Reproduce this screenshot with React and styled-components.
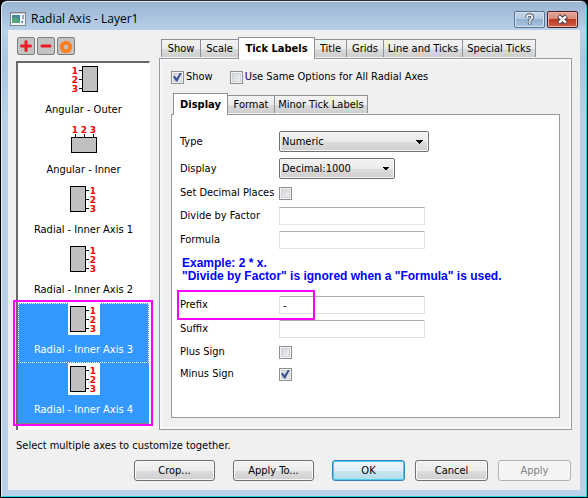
import React, { useState } from 'react';
import styled, { createGlobalStyle, css } from 'styled-components';

const uiFont = '11px/14px "DejaVu Sans Condensed", "DejaVu Sans", sans-serif';

const GlobalStyle = createGlobalStyle`
  *, *::before, *::after { box-sizing: border-box; }
  body { margin: 0; background: #000; font: ${uiFont}; color: #000; }
  button, input, select { font: inherit; color: inherit; margin: 0; }
`;

const DialogWindow = styled.main`
  display: flex;
  flex-direction: column;
  min-height: 100vh;
  padding: 1px 7px 7px 7px;
  border: 1px solid #000;
  border-top-color: #2b2a33;
  border-radius: 7px 7px 0 0;
  background: linear-gradient(#98b3d1, #b9d1ea 30px, #a9c6e2 60px, #b9d1ea 120px);
  box-shadow: inset 1px 1px 0 #dceaf6, inset -1px -1px 0 #25cfe6;
`;

const TitleBar = styled.header`
  display: flex;
  align-items: center;
  gap: 5px;
  height: 28px;
  padding: 6px 2px 0;
`;

const Title = styled.h1`
  flex: 1;
  margin: 0;
  font: 12px/18px "Open Sans", sans-serif;
`;

const CaptionButtons = styled.div`
  display: flex;
  gap: 2px;
`;

const CaptionButton = styled.button`
  display: grid;
  place-items: center;
  width: 31px;
  height: 17px;
  padding: 0;
  border: 1px solid ${(p) => (p.$danger ? '#4d1c20' : '#5b7189')};
  border-radius: 2px;
  background: ${(p) =>
    p.$danger
      ? 'linear-gradient(#e3a596, #d98876 50%, #bd3a21 50%, #cf6046)'
      : 'linear-gradient(#c3d5ea, #b3cae3 50%, #94b1d0 50%, #a9c5e3)'};
  box-shadow: inset 0 0 0 1px ${(p) => (p.$danger ? '#eab5a8' : '#d3e1f0')};
`;

const Client = styled.div`
  display: flex;
  flex: 1;
  flex-direction: column;
  padding: 7px 8px 9px;
  background: #f0f0f0;
`;

const Columns = styled.div`
  display: flex;
  flex: 1;
  gap: 9px;
`;

const Sidebar = styled.aside`
  display: flex;
  flex: 0 0 134px;
  flex-direction: column;
  gap: 6px;
`;

const Toolbar = styled.div`
  display: flex;
  gap: 2px;
  padding-left: 1px;
`;

const ToolButton = styled.button`
  display: grid;
  place-items: center;
  width: 18px;
  height: 18px;
  padding: 0;
  border: 1px solid #7e7e7e;
  border-radius: 2px;
  background: #c3c3c3;
`;

const ListFrame = styled.div`
  position: relative;
  display: flex;
  flex: 1;
  flex-direction: column;
`;

const AxisList = styled.div`
  flex: 1;
  padding-bottom: 6px;
  border: solid #fff;
  border-width: 2px 1px 0 2px;
  border-top-color: #696969;
  border-left-color: #696969;
  background: linear-gradient(#888, #888) left bottom 4px / 100% 3px no-repeat #fff;
`;

const AxisItem = styled.button`
  display: flex;
  flex-direction: column;
  align-items: center;
  gap: 8px;
  width: 100%;
  height: 60px;
  padding: 0;
  border: 0;
  background: #fff;
  ${(p) => p.$selected && css`
    background: #3399ff;
    color: #fff;
  `}
  ${(p) => p.$focused && css`
    outline: 1px dotted #fff;
    outline-offset: -1px;
  `}
`;

const AxisPicture = styled.svg`
  flex: none;
  width: 32px;
  height: 32px;
  background: #fff;
`;

const Marker = styled.div`
  position: absolute;
  border: 2px solid #ff00ff;
  pointer-events: none;
`;

const ListMarker = styled(Marker)`
  inset: auto -3px 4px -3px;
  height: 126px;
`;

const PrefixMarker = styled(Marker)`
  inset: -3px auto -3px -3px;
  width: 138px;
`;

const TabPane = styled.section`
  display: flex;
  flex: 1;
  flex-direction: column;
  min-width: 0;
`;

const TabBar = styled.div`
  display: flex;
  align-items: flex-end;
  height: 21px;
  padding-left: 3px;
`;

const Tab = styled.button`
  height: 18px;
  width: ${(p) => p.$width}px;
  margin-left: -1px;
  margin-bottom: 1px;
  padding: 0;
  border: 1px solid #8e8f9a;
  border-bottom: 0;
  background: linear-gradient(#f3f3f3, #ebebeb 50%, #dcdcdc 50%, #cfcfcf);
  white-space: nowrap;
  ${(p) => p.$active && css`
    z-index: 1;
    height: 22px;
    margin-bottom: -1px;
    background: #fff;
    font-weight: bold;
  `}
`;

const OuterPanel = styled.div`
  display: flex;
  flex: 1;
  flex-direction: column;
  padding: 9px 11px 11px;
  border: 1px solid #989aa3;
  box-shadow: inset 0 0 0 2px #f8f8fb;
`;

const OptionRow = styled.div`
  display: flex;
  gap: 17px;
  height: 25px;
`;

const CheckLabel = styled.label`
  display: flex;
  align-items: center;
  gap: 2px;
  height: 18px;
`;

const CheckBox = styled.input.attrs({ type: 'checkbox' })`
  appearance: none;
  flex: none;
  display: grid;
  place-items: center;
  width: 13px;
  height: 13px;
  border: 1px solid #8e8f8f;
  background: linear-gradient(135deg, #cbcfd5, #f6f6f6);
  box-shadow: inset 0 0 0 1px #f4f4f4, inset 0 0 0 2px #cfd3d8;
  &:checked::before {
    content: '';
    width: 9px;
    height: 9px;
    background: #3f5596;
    clip-path: polygon(0 48%, 20% 36%, 40% 62%, 78% 0, 100% 0, 50% 100%, 34% 100%);
  }
`;

const InnerPanel = styled.div`
  flex: 1;
  padding: 13px 8px;
  border: 1px solid #989aa3;
  background: #fff;
`;

const FormGrid = styled.div`
  display: grid;
  grid-template-columns: 99px 1fr;
  grid-template-rows: 27px 27px 22px 24px 24px 41px 24px 24px 22px 22px;
`;

const FormRow = styled.div`
  position: relative;
  display: grid;
  grid-column: 1 / -1;
  grid-template-columns: subgrid;
  align-items: center;
`;

const Note = styled.p`
  grid-column: 1 / -1;
  align-self: center;
  margin: 0;
  padding: 0 0 6px 2px;
  color: #0000ff;
  font: bold 12px/13px "Liberation Sans", Arial, sans-serif;
`;

const Select = styled.select`
  appearance: none;
  width: ${(p) => p.$width}px;
  height: 21px;
  padding: 0 20px 0 2px;
  border: 1px solid #707070;
  border-radius: 2px;
  background:
    linear-gradient(to bottom right, #000 50%, transparent 50%) right 4px center / 4px 4px no-repeat,
    linear-gradient(to bottom left, #000 50%, transparent 50%) right 8px center / 4px 4px no-repeat,
    linear-gradient(#f3f3f3, #ebebeb 50%, #dcdcdc 50%, #cfcfcf);
  box-shadow: inset 0 0 0 1px #f6f6f6;
`;

const TextBox = styled.input`
  width: 146px;
  height: 18px;
  padding: 0 3px;
  border: 1px solid #e2e3ea;
  border-top-color: #abadb3;
  border-radius: 1px;
  background: #fff;
`;

const Status = styled.p`
  margin: 0;
  padding-top: 9px;
`;

const Footer = styled.footer`
  display: flex;
  justify-content: flex-end;
  gap: 10px;
  margin-top: 7px;
  padding-right: 1px;
`;

const ButtonGroup = styled.div`
  display: flex;
  gap: 18px;
  margin-right: 8px;
`;

const PushButton = styled.button`
  width: ${(p) => (p.$wide ? 81 : 73)}px;
  height: 21px;
  padding: 0;
  border: 1px solid #707070;
  border-radius: 3px;
  background: linear-gradient(#f2f2f2, #ebebeb 50%, #dddddd 50%, #cfcfcf);
  box-shadow: inset 0 0 0 1px #f8f8f8;
  ${(p) => p.$primary && css`
    border-color: #3c7fb1;
    background: linear-gradient(#edf5f8, #e0eff5 50%, #c9e5f0 50%, #b2dcea);
    box-shadow: inset 0 0 0 1px #48cdf3;
  `}
  &:disabled {
    border-color: #adb2b5;
    background: #f4f4f4;
    color: #838383;
  }
`;

const AppIcon = () => (
  <svg width="16" height="14" viewBox="0 0 16 14" aria-hidden="true">
    <rect x="0.5" y="0.5" width="15" height="13" fill="#f4f7f8" stroke="#7d8388" />
    <rect x="2" y="3" width="8" height="8" fill="#46869b" />
    <path d="M2 7L6 5L10 9V11H2Z" fill="#57a77d" />
    <path d="M11 10h2M13 3v4M12 10h1" stroke="#2e5d92" />
    <path d="M1 1.5h14" stroke="#c4ccd2" />
  </svg>
);

const HelpIcon = () => (
  <svg width="11" height="13" viewBox="0 0 11 13" aria-hidden="true">
    <path d="M3 4.5C3 2.5 4 2 5.5 2S8.3 2.7 8.3 4.2 5.7 6 5.7 8M5.7 9.5V11.5" fill="none" stroke="#4c5563" strokeWidth="3.6" />
    <path d="M3 4.5C3 2.5 4 2 5.5 2S8.3 2.7 8.3 4.2 5.7 6 5.7 8M5.7 9.5V11.2" fill="none" stroke="#fff" strokeWidth="1.7" />
  </svg>
);

const CloseIcon = () => (
  <svg width="13" height="11" viewBox="0 0 13 11" aria-hidden="true">
    <path d="M2.5 2L10.5 9M10.5 2L2.5 9" stroke="#49404a" strokeWidth="4.4" />
    <path d="M3 2.4L10 8.6M10 2.4L3 8.6" stroke="#fff" strokeWidth="2.4" />
  </svg>
);

const digitStyle = {
  fill: '#f00',
  fontFamily: '"DejaVu Sans", sans-serif',
  fontWeight: 'bold',
  fontSize: 9,
  textAnchor: 'middle',
};

const axisShapes = {
  left: { box: [14.5, 3.5, 15, 25], ticks: 'M11 7.5h3M11 16.5h3M11 25.5h3', digits: [[7, 11], [7, 20], [7, 29]] },
  top: { box: [3.5, 14.5, 25, 15], ticks: 'M7.5 11v3M16.5 11v3M25.5 11v3', digits: [[7, 10], [16, 10], [25, 10]] },
  right: { box: [2.5, 3.5, 15, 25], ticks: 'M18 7.5h3M18 16.5h3M18 25.5h3', digits: [[25, 11], [25, 20], [25, 29]] },
};

const AxisIcon = ({ side }) => {
  const { box, ticks, digits } = axisShapes[side];
  return (
    <AxisPicture viewBox="0 0 32 32" aria-hidden="true">
      <rect x={box[0]} y={box[1]} width={box[2]} height={box[3]} fill="#c0c0c0" stroke="#000" />
      <path d={ticks} stroke="#000" />
      {digits.map(([x, y], i) => (
        <text key={i} x={x} y={y} {...digitStyle}>{i + 1}</text>
      ))}
    </AxisPicture>
  );
};

const axes = [
  { name: 'Angular - Outer', side: 'left' },
  { name: 'Angular - Inner', side: 'top' },
  { name: 'Radial - Inner Axis 1', side: 'right' },
  { name: 'Radial - Inner Axis 2', side: 'right' },
  { name: 'Radial - Inner Axis 3', side: 'right', selected: true, focused: true },
  { name: 'Radial - Inner Axis 4', side: 'right', selected: true },
];

const mainTabs = [
  ['Show', 40], ['Scale', 39], ['Tick Labels', 77], ['Title', 33], ['Grids', 38], ['Line and Ticks', 80], ['Special Ticks', 74],
];
const labelTabs = [['Display', 55], ['Format', 48], ['Minor Tick Labels', 94]];

const Tabs = ({ items, active }) => (
  <TabBar role="tablist">
    {items.map(([name, width]) => (
      <Tab key={name} role="tab" aria-selected={name === active} $active={name === active} $width={width}>
        {name}
      </Tab>
    ))}
  </TabBar>
);

const CheckField = ({ id, label, checked }) => (
  <FormRow>
    <label htmlFor={id}>{label}</label>
    <CheckBox id={id} defaultChecked={checked} />
  </FormRow>
);

const TextField = ({ id, label, value = '', marked }) => (
  <FormRow>
    <label htmlFor={id}>{label}</label>
    <TextBox id={id} defaultValue={value} />
    {marked && <PrefixMarker />}
  </FormRow>
);

const SelectField = ({ id, label, value, width }) => (
  <FormRow>
    <label htmlFor={id}>{label}</label>
    <Select id={id} $width={width}>
      <option>{value}</option>
    </Select>
  </FormRow>
);

export default function App() {
  const [picked, setPicked] = useState(axes.filter((a) => a.selected).map((a) => a.name));
  const toggle = (name) =>
    setPicked((p) => (p.includes(name) ? p.filter((n) => n !== name) : [...p, name]));

  return (
    <>
      <GlobalStyle />
      <DialogWindow>
        <TitleBar>
          <AppIcon />
          <Title>Radial Axis - Layer1</Title>
          <CaptionButtons>
            <CaptionButton aria-label="Help"><HelpIcon /></CaptionButton>
            <CaptionButton $danger aria-label="Close"><CloseIcon /></CaptionButton>
          </CaptionButtons>
        </TitleBar>
        <Client>
          <Columns>
            <Sidebar>
              <Toolbar>
                <ToolButton aria-label="Add axis">
                  <svg width="12" height="12"><path d="M6 1.5v9M1.5 6h9" stroke="#ed1c24" strokeWidth="3" strokeLinecap="round" /></svg>
                </ToolButton>
                <ToolButton aria-label="Remove axis">
                  <svg width="12" height="12"><path d="M2 6h8" stroke="#ed1c24" strokeWidth="3" strokeLinecap="round" /></svg>
                </ToolButton>
                <ToolButton aria-label="Axis options">
                  <svg width="14" height="14"><circle cx="7" cy="8" r="4.2" fill="none" stroke="#ff7f27" strokeWidth="4" /></svg>
                </ToolButton>
              </Toolbar>
              <ListFrame>
                <AxisList role="listbox" aria-label="Axes" aria-multiselectable="true">
                  {axes.map((a) => (
                    <AxisItem
                      key={a.name}
                      role="option"
                      aria-selected={picked.includes(a.name)}
                      $selected={picked.includes(a.name)}
                      $focused={a.focused}
                      onClick={() => toggle(a.name)}
                    >
                      <AxisIcon side={a.side} />
                      {a.name}
                    </AxisItem>
                  ))}
                </AxisList>
                <ListMarker />
              </ListFrame>
            </Sidebar>
            <TabPane>
              <Tabs items={mainTabs} active="Tick Labels" />
              <OuterPanel>
                <OptionRow>
                  <CheckLabel><CheckBox defaultChecked />Show</CheckLabel>
                  <CheckLabel><CheckBox />Use Same Options for All Radial Axes</CheckLabel>
                </OptionRow>
                <Tabs items={labelTabs} active="Display" />
                <InnerPanel>
                  <FormGrid>
                    <SelectField id="type" label="Type" value="Numeric" width={150} />
                    <SelectField id="display" label="Display" value="Decimal:1000" width={116} />
                    <CheckField id="places" label="Set Decimal Places" />
                    <TextField id="factor" label="Divide by Factor" />
                    <TextField id="formula" label="Formula" />
                    <Note>
                      Example: 2 * x.<br />
                      "Divide by Factor" is ignored when a "Formula" is used.
                    </Note>
                    <TextField id="prefix" label="Prefix" value="-" marked />
                    <TextField id="suffix" label="Suffix" />
                    <CheckField id="plus" label="Plus Sign" />
                    <CheckField id="minus" label="Minus Sign" checked />
                  </FormGrid>
                </InnerPanel>
              </OuterPanel>
            </TabPane>
          </Columns>
          <Status>Select multiple axes to customize together.</Status>
          <Footer>
            <ButtonGroup>
              <PushButton $wide>Crop...</PushButton>
              <PushButton $wide>Apply To...</PushButton>
            </ButtonGroup>
            <PushButton $primary>OK</PushButton>
            <PushButton>Cancel</PushButton>
            <PushButton disabled>Apply</PushButton>
          </Footer>
        </Client>
      </DialogWindow>
    </>
  );
}
